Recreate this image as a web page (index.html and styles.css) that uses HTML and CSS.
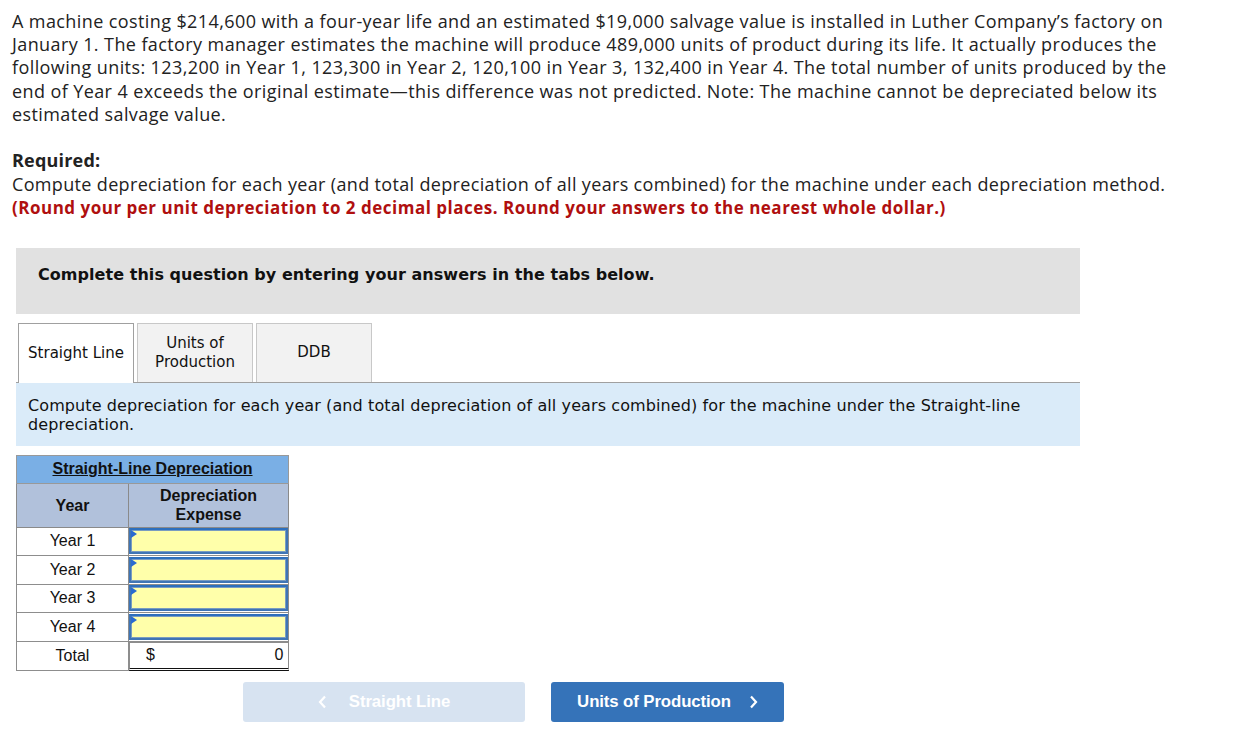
FILE: index.html
```html
<!DOCTYPE html>
<html>
<head>
<meta charset="utf-8">
<link rel="stylesheet" href="styles.css">
</head>
<body>
<div class="page">
  <p class="intro">A machine costing $214,600 with a four-year life and an estimated $19,000 salvage value is installed in Luther Company’s factory on January 1. The factory manager estimates the machine will produce 489,000 units of product during its life. It actually produces the following units: 123,200 in Year 1, 123,300 in Year 2, 120,100 in Year 3, 132,400 in Year 4. The total number of units produced by the end of Year 4 exceeds the original estimate—this difference was not predicted. Note: The machine cannot be depreciated below its estimated salvage value.</p>

  <div class="required">
    <div class="req-title">Required:</div>
    <div>Compute depreciation for each year (and total depreciation of all years combined) for the machine under each depreciation method.</div>
    <div class="red">(Round your per unit depreciation to 2 decimal places. Round your answers to the nearest whole dollar.)</div>
  </div>

  <div class="complete">Complete this question by entering your answers in the tabs below.</div>

  <div class="tabs">
    <div class="tab active">Straight Line</div>
    <div class="tab">Units of<br>Production</div>
    <div class="tab">DDB</div>
  </div>

  <div class="instr">Compute depreciation for each year (and total depreciation of all years combined) for the machine under the Straight-line depreciation.</div>

  <table class="dep">
    <tr><th colspan="2" class="title"><span>Straight-Line Depreciation</span></th></tr>
    <tr class="hdr"><th class="c1">Year</th><th class="c2">Depreciation<br>Expense</th></tr>
    <tr><td class="c1">Year 1</td><td class="inp"><div class="box"><span class="flag"></span></div></td></tr>
    <tr><td class="c1">Year 2</td><td class="inp"><div class="box"><span class="flag"></span></div></td></tr>
    <tr><td class="c1">Year 3</td><td class="inp"><div class="box"><span class="flag"></span></div></td></tr>
    <tr><td class="c1">Year 4</td><td class="inp"><div class="box"><span class="flag"></span></div></td></tr>
    <tr class="total"><td class="c1">Total</td><td class="tot"><span>$</span><span>0</span></td></tr>
  </table>

  <div class="nav">
    <div class="btn prev">
      <svg class="chev" width="9" height="14" viewBox="0 0 9 14"><polyline points="7,1.5 2,7 7,12.5" fill="none" stroke="#fff" stroke-width="2.2"/></svg>
      <span>Straight Line</span>
    </div>
    <div class="btn next">
      <span>Units of Production</span>
      <svg class="chev" width="9" height="14" viewBox="0 0 9 14"><polyline points="2,1.5 7,7 2,12.5" fill="none" stroke="#fff" stroke-width="2.2"/></svg>
    </div>
  </div>
</div>
</body>
</html>
```

FILE: styles.css
```css
* { box-sizing: border-box; }
html, body { margin: 0; padding: 0; background: #fff; }
.page {
  padding: 10px 16px 0 12px;
  color: #1f1f1f;
  font-family: "Open Sans", "Lato", sans-serif;
}
.intro {
  margin: 0;
  font-size: 18px;
  letter-spacing: 0.4px;
  line-height: 23.2px;
  width: 1190px;
  color: #222;
}
.required {
  margin-top: 23px;
  font-size: 18px;
  letter-spacing: 0.34px;
  line-height: 23.5px;
  color: #222;
}
.req-title { font-weight: 700; letter-spacing: 0.2px; }
.red { color: #b00f0f; font-weight: 700; font-size: 17px; letter-spacing: 0.5px; }

.complete {
  margin: 28px 0 0 4px;
  width: 1064px;
  height: 66px;
  background: #e1e1e1;
  padding: 17px 0 0 22px;
  font-family: "DejaVu Sans", sans-serif;
  font-weight: 700;
  font-size: 16px;
  letter-spacing: 0.05px;
  color: #111;
}
.tabs {
  display: flex;
  gap: 3px;
  margin: 9px 0 0 4px;
  width: 1064px;
  border-bottom: 1px solid #a0a0a0;
  padding-left: 2px;
}
.tab {
  width: 116px;
  height: 59px;
  border: 1px solid #c8c8c8;
  border-bottom: none;
  background: #f2f2f2;
  display: flex;
  align-items: center;
  justify-content: center;
  text-align: center;
  font-family: "DejaVu Sans", sans-serif;
  font-size: 15px;
  line-height: 19px;
  color: #111;
}
.tab.active {
  background: #fff;
  border-color: #a0a0a0;
  margin-bottom: -1px;
  height: 60px;
}
.instr {
  margin-left: 4px;
  width: 1064px;
  height: 63px;
  background: #daebf9;
  padding: 13px 12px 0 12px;
  font-family: "DejaVu Sans", sans-serif;
  font-size: 16px;
  letter-spacing: 0.1px;
  line-height: 19px;
  color: #111;
}
.dep {
  margin: 9px 0 0 4px;
  border-collapse: collapse;
  font-family: "Liberation Sans", Arial, sans-serif;
  font-size: 16px;
  color: #111;
}
.dep th, .dep td { padding: 0; border: 1px solid #8d8d8d; }
.dep .title {
  background: #7aafe5;
  height: 28px;
  font-weight: 700;
  font-size: 16px;
  border-color: #999;
}
.dep .title span { text-decoration: underline; }
.dep .hdr th {
  background: #b1c1db;
  height: 44px;
  font-weight: 700;
  font-size: 16px;
  line-height: 19px;
  border-color: #8a8a8a;
}
.dep .c1 { width: 112px; text-align: center; }
.dep .c2 { width: 160px; }
.dep td { height: 28.5px; }
.dep .inp { padding: 0; width: 160px; }
.box {
  position: relative;
  height: 26px;
  margin: 0;
  background: #ffffaa;
  border: 2px solid #3f75b5;
  border-top-color: #2d6fbd;
  box-shadow: inset 0 0 0 1px #7a9cc0;
}
.flag {
  position: absolute;
  left: 0;
  top: 0;
  width: 0; height: 0;
  border-top: 4px solid transparent;
  border-bottom: 4px solid transparent;
  border-left: 6px solid #2a6ad0;
}
.dep .tot {
  display: flex;
  justify-content: space-between;
  padding: 0 4px 0 16px;
  align-items: center;
  height: 29px;
  border-left: 1px solid #8d8d8d;
  border-right: 1px solid #8d8d8d;
  border-bottom: 3px double #111;
}
.dep .total td.c1 { height: 29px; }
.nav {
  display: flex;
  gap: 26px;
  margin: 11px 0 0 231px;
}
.btn {
  height: 40px;
  border-radius: 3px;
  display: flex;
  align-items: center;
  justify-content: center;
  gap: 18px;
  font-family: "Liberation Sans", Arial, sans-serif;
  font-weight: 700;
  font-size: 16.8px;
  letter-spacing: -0.1px;
  color: #fff;
}
.btn .chev { display: block; }
.prev { width: 282px; background: #d7e3f1; gap: 22px; }
.next { width: 233px; background: #3573b9; }
```
